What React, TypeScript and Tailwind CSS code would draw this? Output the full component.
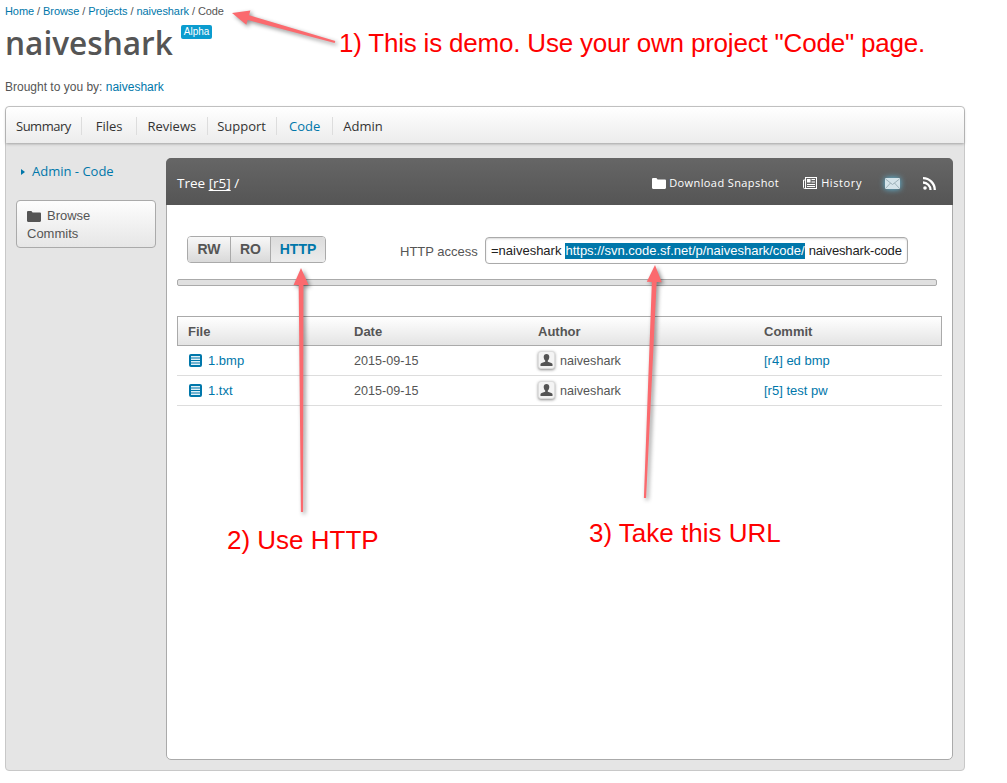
const sans = "font-['Liberation_Sans',Arial,sans-serif]"
const ubuntu = "font-['Open_Sans','Noto_Sans',sans-serif]"

const navItems = [
  { label: 'Summary', className: 'tracking-[-0.5px] pr-[10px] mr-[14px] border-r' },
  { label: 'Files', className: 'pr-[13px] mr-[11px] border-r' },
  { label: 'Reviews', className: 'pr-[11px] mr-[9px] border-r' },
  { label: 'Support', className: 'pr-[10px] mr-[12px] border-r' },
  { label: 'Code', className: 'pr-[12px] mr-[10px] border-r text-[#0077aa]' },
  { label: 'Admin', className: '' },
]

const rows = [
  { file: '1.bmp', date: '2015-09-15', author: 'naiveshark', commit: '[r4] ed bmp' },
  { file: '1.txt', date: '2015-09-15', author: 'naiveshark', commit: '[r5] test pw' },
]

function FolderIcon({ className }: { className?: string }) {
  return (
    <svg viewBox="0 0 14 11" className={className} fill="currentColor">
      <path d="M0 1.2C0 .5.5 0 1.2 0h3.2l1.2 1.4h7.2c.7 0 1.2.5 1.2 1.2v7.2c0 .7-.5 1.2-1.2 1.2H1.2C.5 11 0 10.500 0 9.800z" />
    </svg>
  )
}

function HistoryIcon() {
  return (
    <svg viewBox="0 0 14 12" className="w-[14px] h-[12px] text-white" fill="none" stroke="currentColor">
      <rect x="2.5" y="0.500" width="11" height="11" fill="#666" />
      <path d="M2.500 3H.5v7.500a1 1 0 0 0 1 1h1" />
      <rect x="4" y="2" width="3.500" height="3.500" fill="currentColor" stroke="none" />
      <path d="M8.500 2.500H12M8.500 5H12M4 7.500h8M4 9.500h8" />
    </svg>
  )
}

function MailIcon() {
  return (
    <svg viewBox="0 0 15 11" className="w-[15px] h-[11px] drop-shadow-[0_0_3px_#5fc3e8]">
      <rect width="15" height="11" rx="1" fill="#d5e4ea" />
      <path d="M.5 1l7 5.500 7-5.500M.5 10.500l5-5.500M14.500 10.500l-5-5.500" fill="none" stroke="#8fa5ad" strokeWidth="0.800" />
    </svg>
  )
}

function RssIcon() {
  return (
    <svg viewBox="0 0 13 13" className="w-[13px] h-[13px] text-white" fill="none" stroke="currentColor" strokeWidth="2.300">
      <circle cx="2" cy="11" r="1.800" fill="currentColor" stroke="none" />
      <path d="M0 5.500A7.500 7.500 0 0 1 7.500 13M0 1.200A11.800 11.800 0 0 1 11.800 13" />
    </svg>
  )
}

function FileIcon() {
  return (
    <svg viewBox="0 0 13 13" className="w-[13px] h-[13px] shrink-0">
      <rect width="13" height="13" rx="2" fill="#0077aa" />
      <rect x="2" y="2" width="9" height="9" fill="#dff0f8" />
      <path d="M2 4h9M2 6.500h9M2 9h9" stroke="#0077aa" strokeWidth="1.200" />
    </svg>
  )
}

function Avatar() {
  return (
    <span className="w-[17px] h-[18px] rounded-[3px] bg-[#f4f4f4] border border-[#ddd] shadow-[0_1px_3px_rgba(0,0,0,0.45)] flex items-center justify-center shrink-0">
      <svg viewBox="0 0 13 12" className="w-[13px] h-[12px] text-[#555]" fill="currentColor">
        <path d="M6.500 0C8.300 0 9.300 1.300 9.300 3c0 1.500-.8 3-1.500 3.600v1.100c2 .6 4.200 1.200 4.700 2.300V12H.5v-2c.5-1.100 2.700-1.700 4.700-2.300V6.600C4.500 6 3.700 4.500 3.700 3c0-1.700 1-3 2.800-3z" />
      </svg>
    </span>
  )
}

// annotation arrow: shaft from (x1,y1) to the tip at (x2,y2), widening toward the head
function Arrow({ x1, y1, x2, y2 }: { x1: number; y1: number; x2: number; y2: number }) {
  const len = Math.hypot(x2 - x1, y2 - y1)
  const ux = (x2 - x1) / len
  const uy = (y2 - y1) / len
  const nx = -uy
  const ny = ux
  const hx = x2 - ux * 17
  const hy = y2 - uy * 17
  const d = [
    [x1 + nx * 1.1, y1 + ny * 1.1],
    [hx + nx * 2.4, hy + ny * 2.4],
    [hx + nx * 7.5, hy + ny * 7.5],
    [x2, y2],
    [hx - nx * 7.5, hy - ny * 7.5],
    [hx - nx * 2.4, hy - ny * 2.4],
    [x1 - nx * 1.1, y1 - ny * 1.1],
  ]
    .map(p => p.join(','))
    .join(' ')
  return <polygon points={d} fill="#fb6a6e" />
}

function Annotation({ className, children }: { className: string; children: string }) {
  return (
    <div className={`absolute text-[26px] leading-[32px] text-[#fe0000] whitespace-nowrap ${sans} ${className}`}>
      {children}
    </div>
  )
}

export default function App() {
  return (
    <div className={`relative w-[1007px] h-[783px] overflow-hidden bg-white text-[#555] ${sans}`}>
      {/* Page header */}
      <div className="pl-[5px] pt-[5px] h-[106px]">
        <div className="text-[11px] leading-[13px] tracking-[-0.07px] text-[#555]">
          <span className="text-[#0077aa]">Home</span> / <span className="text-[#0077aa]">Browse</span> /{' '}
          <span className="text-[#0077aa]">Projects</span> / <span className="text-[#0077aa]">naiveshark</span> / Code
        </div>
        <div className="flex items-start mt-[5px]">
          <h1 className={`text-[31.6px] leading-[40px] font-semibold text-[#555] ${ubuntu}`}>naiveshark</h1>
          <span className="ml-[8px] mt-[2px] px-[3px] h-[14px] rounded-[2px] bg-[#0b9ccf] text-white text-[10px] leading-[14px]">
            Alpha
          </span>
        </div>
        <div className="mt-[17px] text-[12px] leading-[14px]">
          Brought to you by: <span className="text-[#0077aa]">naiveshark</span>
        </div>
      </div>

      {/* Outer frame */}
      <div className="ml-[5px] w-[960px] h-[665px] rounded-[4px] border border-[#c8c8c8] bg-[#e5e5e5]">
        <nav className={`h-[36px] flex items-center pl-[10px] pt-[2px] bg-gradient-to-b from-white to-[#ececec] rounded-t-[4px] shadow-[0_1px_3px_rgba(0,0,0,0.3)] text-[13px] text-[#333] ${ubuntu}`}>
          {navItems.map(item => (
            <span key={item.label} className={`leading-[18px] border-[#ddd] ${item.className}`}>
              {item.label}
            </span>
          ))}
        </nav>

        <div className="flex pt-[15px]">
          {/* Sidebar */}
          <aside className="w-[160px] shrink-0 pl-[10px] pr-[10px] pt-[2px]">
            <div className={`flex items-center h-[24px] pl-[5px] text-[13px] text-[#0077aa] ${ubuntu}`}>
              <span className="w-0 h-0 border-y-[3px] border-y-transparent border-l-[4px] border-l-[#0077aa] mr-[7px]" />
              Admin - Code
            </div>
            <div className="mt-[16px] h-[48px] rounded-[4px] border border-[#aaa] bg-gradient-to-b from-[#fdfdfd] to-[#e6e6e6] pl-[10px] pt-[6px] text-[13px] leading-[18px] text-[#555]">
              <div className="flex items-center">
                <FolderIcon className="w-[14px] h-[11px] text-[#555] mr-[6px]" />
                Browse
              </div>
              <div>Commits</div>
            </div>
          </aside>

          {/* Main panel */}
          <main className="w-[787px] h-[602px] rounded-[5px] border border-[#aaa] bg-white">
            <header className={`h-[47px] -mt-px -mx-px flex items-center px-[11px] pt-[3px] rounded-t-[5px] bg-gradient-to-b from-[#666] to-[#555] text-white ${ubuntu}`}>
              <div className="text-[13.5px]">
                Tree <span className="underline underline-offset-2">[r5]</span> /
              </div>
              <div className="ml-auto flex items-center text-[11px] pr-[6px]">
                <FolderIcon className="w-[14px] h-[11px] text-white mr-[3px]" />
                <span className="tracking-[0.4px]">Download Snapshot</span>
                <span className="ml-[24px] mr-[4px]"><HistoryIcon /></span>
                <span className="tracking-[0.6px]">History</span>
                <span className="ml-[23px]"><MailIcon /></span>
                <span className="ml-[23px]"><RssIcon /></span>
              </div>
            </header>

            <div className="pl-[10px] pr-[15px] pt-[31px]">
              <div className="flex items-start pl-[10px]">
                <div className="flex h-[27px] rounded-[4px] border border-[#aaa] overflow-hidden text-[14px] leading-[25px] font-bold text-[#555]">
                  <span className="w-[43px] text-center bg-gradient-to-b from-[#f8f8f8] to-[#d9d9d9] border-r border-[#aaa]">RW</span>
                  <span className="w-[40px] text-center bg-gradient-to-b from-[#f8f8f8] to-[#d9d9d9] border-r border-[#aaa]">RO</span>
                  <span className="w-[54px] text-center bg-gradient-to-b from-[#dcdcdc] to-[#ececec] text-[#0077aa]">HTTP</span>
                </div>
                <span className="ml-[74px] mt-[8px] text-[13px] leading-[16px] text-[#555]">HTTP access</span>
                <div className="ml-[7px] mt-px w-[423px] h-[27px] rounded-[4px] border border-[#aaa] shadow-[inset_0_1px_2px_rgba(0,0,0,0.15)] px-[5px] flex items-center">
                  <div className="w-full overflow-hidden flex justify-end text-[13px] leading-[16px] text-[#222] whitespace-nowrap">
                    <span>e=naiveshark</span>
                    <span className="bg-[#0077aa] text-white ml-[4px]">https://svn.code.sf.net/p/naiveshark/code/</span>
                    <span className="ml-[4px] tracking-[-0.15px]">naiveshark-code</span>
                  </div>
                </div>
              </div>

              <div className="mt-[15px] w-[760px] h-[7px] rounded-[2px] border border-[#aaa] bg-[#e0e0e0]" />

              {/* File table */}
              <div className="mt-[30px] w-[765px] text-[12.6px]">
                <div className="grid grid-cols-[166px_184px_226px_1fr] h-[30px] items-center pt-px border border-[#aaa] bg-gradient-to-b from-white to-[#e4e4e4] text-[13px] font-bold text-[#555]">
                  <span className="pl-[10px]">File</span>
                  <span className="pl-[10px]">Date</span>
                  <span className="pl-[10px]">Author</span>
                  <span className="pl-[10px]">Commit</span>
                </div>
                {rows.map(row => (
                  <div key={row.file} className="grid grid-cols-[166px_184px_226px_1fr] h-[30px] items-center border-b border-[#ddd]">
                    <span className="flex items-center pl-[12px] text-[#0077aa]">
                      <FileIcon />
                      <span className="ml-[6px] text-[13px]">{row.file}</span>
                    </span>
                    <span className="pl-[11px] pt-px">{row.date}</span>
                    <span className="flex items-center pl-[11px]">
                      <Avatar />
                      <span className="ml-[5px] pt-[2px]">{row.author}</span>
                    </span>
                    <span className="pl-[11px] text-[13px] text-[#0077aa]">{row.commit}</span>
                  </div>
                ))}
              </div>
            </div>
          </main>
        </div>
      </div>

      {/* Annotations drawn over the page */}
      <svg className="absolute inset-0 pointer-events-none drop-shadow-[2px_2px_2px_rgba(0,0,0,0.45)]" width="1007" height="783">
        <Arrow x1={335} y1={42} x2={232} y2={13} />
        <Arrow x1={302} y1={512} x2={301} y2={268} />
        <Arrow x1={645} y1={498} x2={655} y2={265} />
      </svg>
      <Annotation className="left-[339px] top-[27px] tracking-[-0.2px]">1) This is demo. Use your own project "Code" page.</Annotation>
      <Annotation className="left-[227px] top-[524px]">2) Use HTTP</Annotation>
      <Annotation className="left-[589px] top-[517px]">3) Take this URL</Annotation>
    </div>
  )
}
